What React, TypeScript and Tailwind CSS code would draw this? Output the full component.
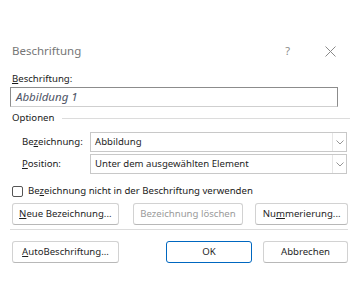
import React from 'react';

function Btn({ children, disabled, primary, className = '' }: { children: React.ReactNode; disabled?: boolean; primary?: boolean; className?: string }) {
  return (
    <div
      className={`h-[22px] flex items-center justify-center rounded-[3px] border bg-white ${
        primary ? 'border-[#0067c0] border-[1.5px]' : 'border-[#d2d2d2] border-b-[#b8b8b8]'
      } ${disabled ? 'text-[#9a9a9a]' : 'text-[#1f1f1f]'} ${className}`}
    >
      {children}
    </div>
  );
}

function Select({ value }: { value: string }) {
  return (
    <div className="flex-1 h-[20px] border border-[#c8c8c8] flex items-center">
      <span className="flex-1 pl-[4px] text-[#1f1f1f]">{value}</span>
      <div className="w-[14px] h-full border-l border-[#e6e6e6] flex items-center justify-center">
        <svg width="8" height="5" viewBox="0 0 8 5">
          <path d="M0.5 0.5 L4 4 L7.5 0.5" fill="none" stroke="#8a8a8a" strokeWidth="0.9" />
        </svg>
      </div>
    </div>
  );
}

export default function App() {
  return (
    <div
      className="w-[350px] h-[300px] bg-white text-[9.6px] text-[#1a1a1a] overflow-hidden"
      style={{ fontFamily: '"Noto Sans", "Open Sans", sans-serif' }}
    >
      <div className="pt-[42px] pl-[12px] pr-[14px] flex items-center h-[60px]">
        <span className="text-[11.5px] text-[#767676] flex-1">Beschriftung</span>
        <span className="text-[11px] text-[#8a8a8a] mr-[35px]">?</span>
        <svg width="11" height="11" viewBox="0 0 11 11">
          <path d="M0.5 0.5 L10.5 10.5 M10.5 0.5 L0.5 10.5" stroke="#8a8a8a" strokeWidth="1" />
        </svg>
      </div>

      <div className="pl-[12px] mt-[12px] leading-[14px]">
        <span className="underline">B</span>eschriftung:
      </div>
      <div className="ml-[10px] mr-[12px] mt-[1px] h-[20px] border border-[#8c8c8c] border-b-[#cfcfcf] flex items-center">
        <span className="pl-[5px] italic text-[11.5px] text-[#4e5466]">Abbildung 1</span>
      </div>

      <div className="flex items-center pl-[12px] mt-[4px] h-[14px]">
        <span>Optionen</span>
        <div className="flex-1 h-px bg-[#dcdcdc] ml-[8px]"></div>
      </div>

      <div className="flex items-center pl-[22px] pr-[3px] mt-[7px]">
        <span className="w-[68px]">
          Be<span className="underline">z</span>eichnung:
        </span>
        <Select value="Abbildung" />
      </div>
      <div className="flex items-center pl-[22px] pr-[3px] mt-[2px]">
        <span className="w-[68px]">
          <span className="underline">P</span>osition:
        </span>
        <Select value="Unter dem ausgewählten Element" />
      </div>

      <div className="flex items-center pl-[12px] mt-[10px]">
        <div className="w-[11px] h-[11px] border border-[#555] rounded-[2px]"></div>
        <span className="ml-[5px]">
          Be<span className="underline">z</span>eichnung nicht in der Beschriftung verwenden
        </span>
      </div>

      <div className="flex items-center pl-[12px] pr-[2px] mt-[5px]">
        <Btn className="w-[107px]">
          <span><span className="underline">N</span>eue Bezeichnung...</span>
        </Btn>
        <Btn disabled className="w-[111px] ml-[14px]">Bezeichnung löschen</Btn>
        <Btn className="w-[93px] ml-[12px]">
          <span>Nu<span className="underline">m</span>merierung...</span>
        </Btn>
      </div>

      <div className="ml-[10px] mr-[2px] mt-[4px] h-px bg-[#dcdcdc]"></div>

      <div className="flex items-center pl-[12px] pr-[2px] mt-[11px]">
        <Btn className="w-[107px]">
          <span><span className="underline">A</span>utoBeschriftung...</span>
        </Btn>
        <Btn primary className="w-[86px] ml-[47px]">OK</Btn>
        <Btn className="w-[85px] ml-[11px]">Abbrechen</Btn>
      </div>
    </div>
  );
}
